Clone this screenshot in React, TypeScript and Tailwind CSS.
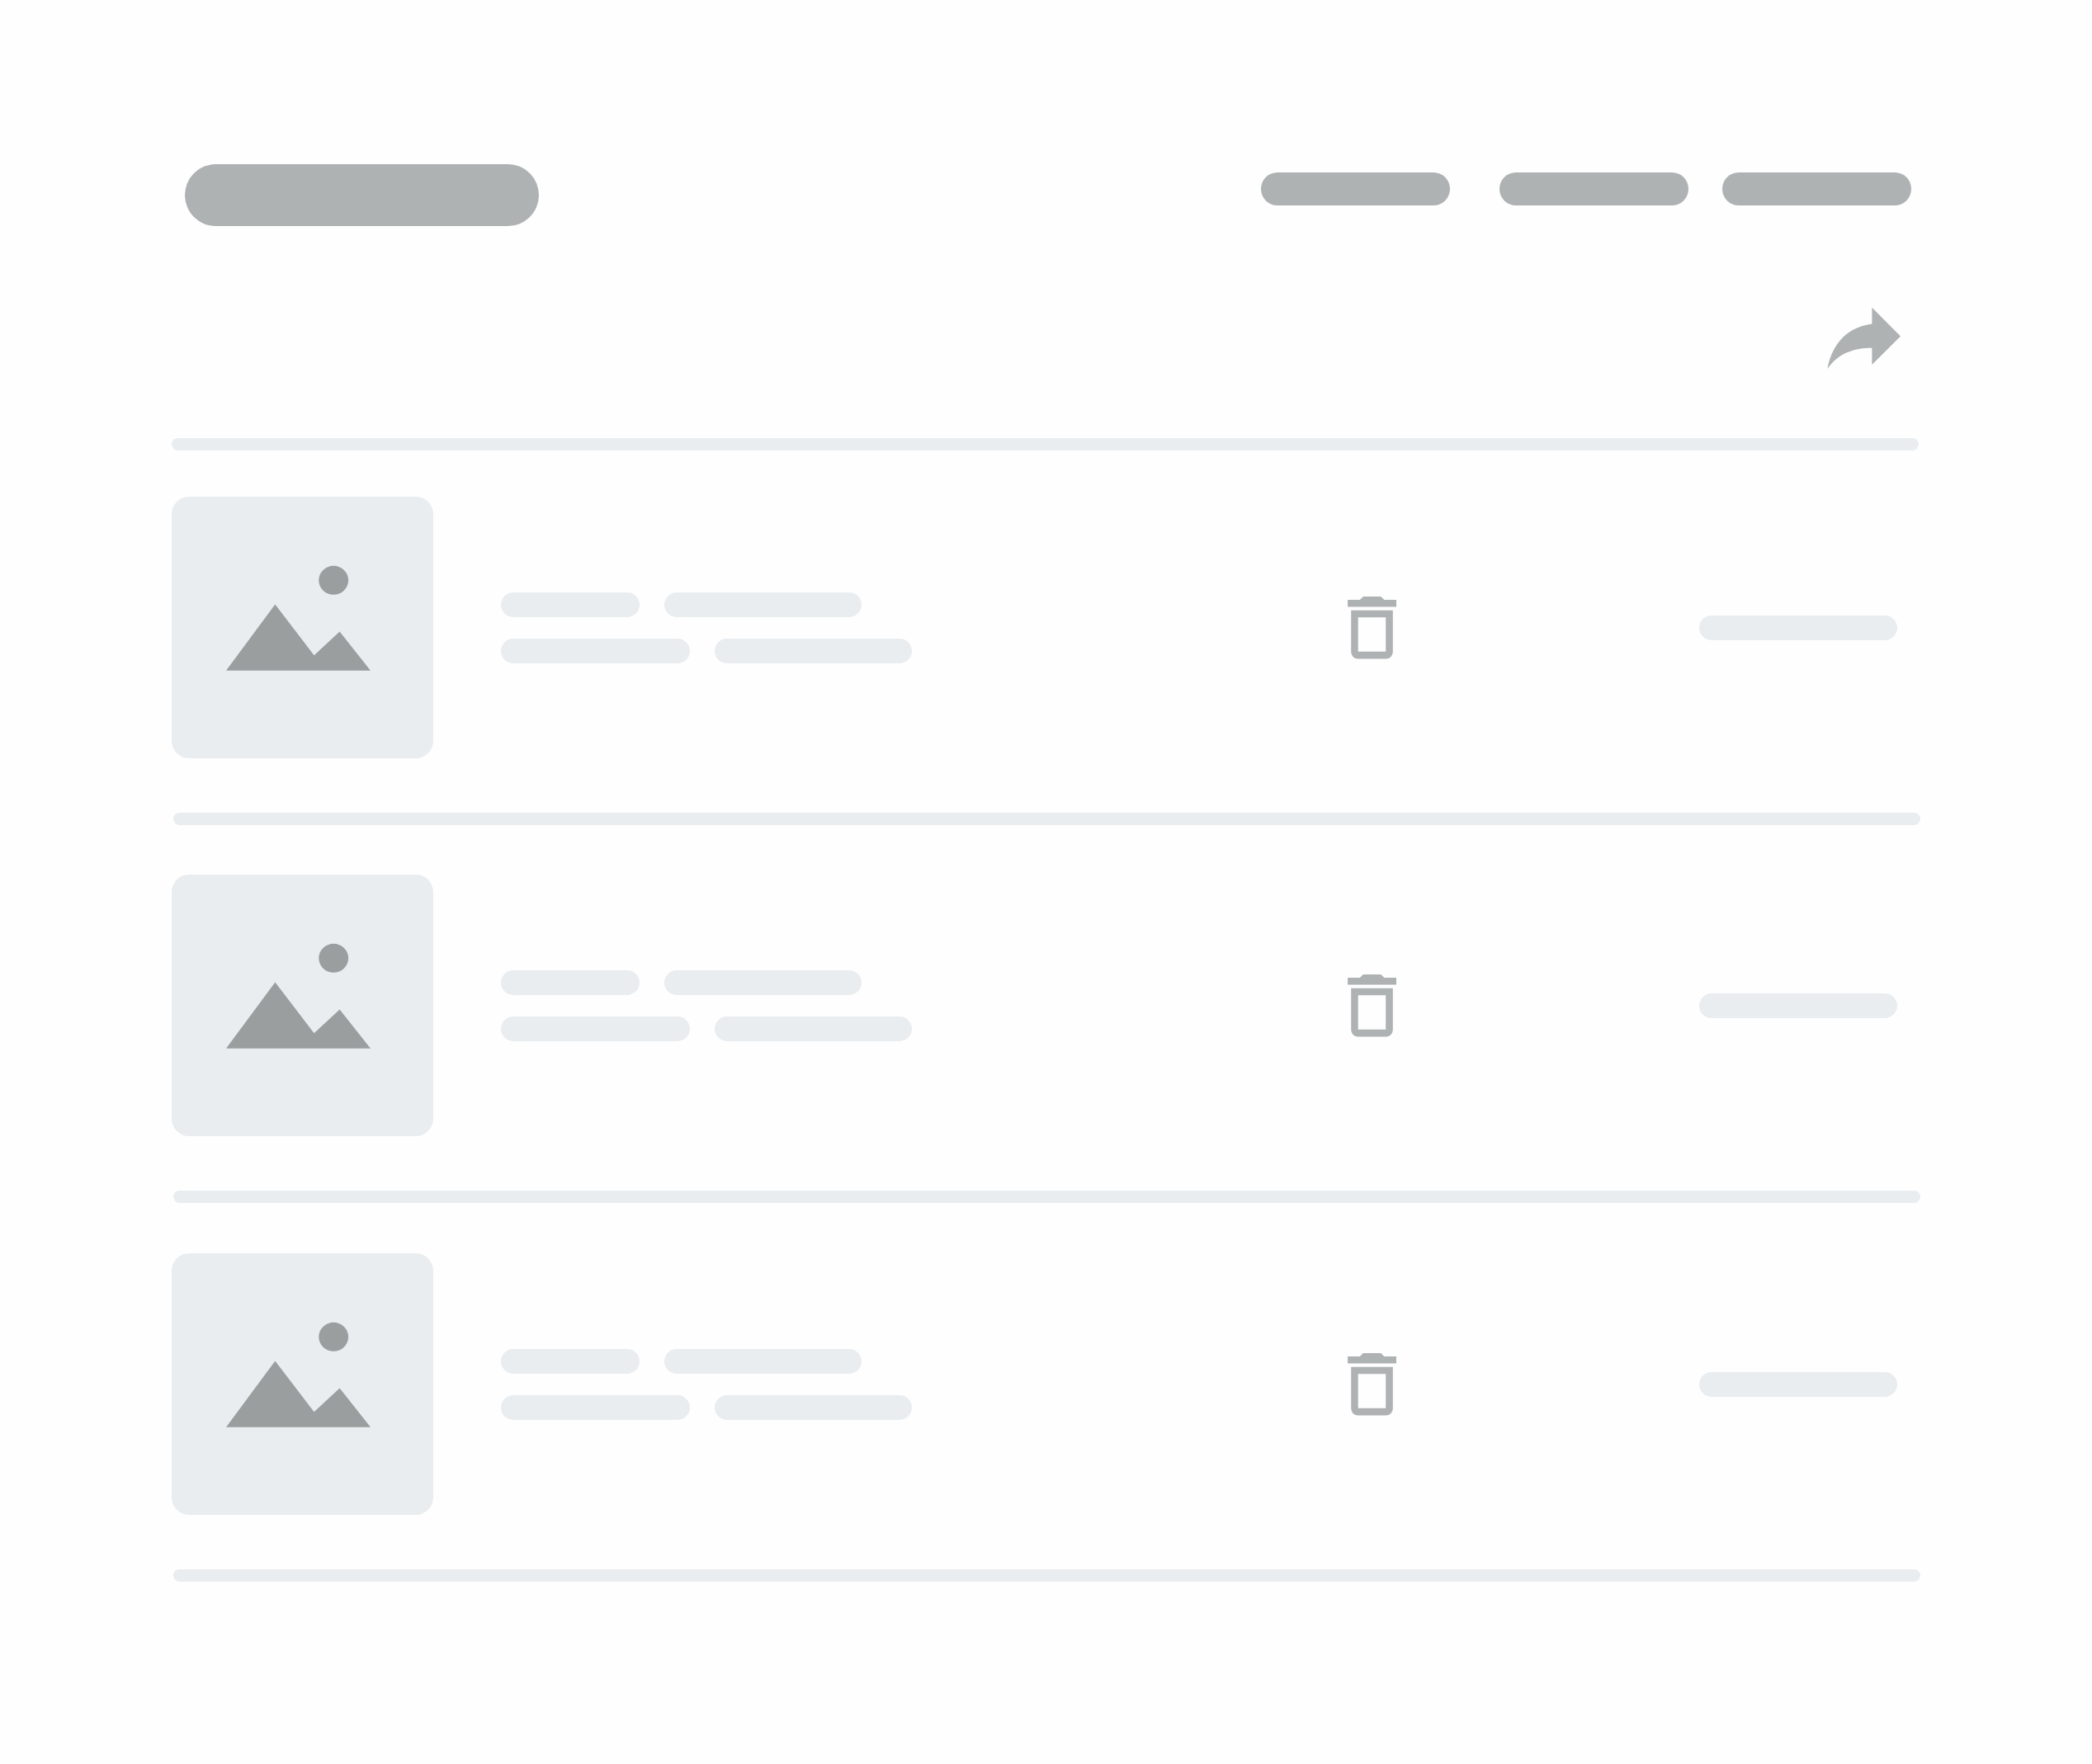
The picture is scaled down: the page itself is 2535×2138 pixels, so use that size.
type PillProps = { className: string };

function Pill({ className }: PillProps) {
  return <div className={`shrink-0 rounded-full ${className}`} />;
}

function ShareIcon() {
  return (
    <svg className="h-[76px] w-[90px] shrink-0" viewBox="2214 372 90 76" fill="#aeb2b3" aria-hidden="true">
      <path d="M2268.4 372.8L2303 407.4L2268.4 442V421.7C2244 421.7 2226.5 429.5 2214.4 447C2219.3 422 2233.5 397.5 2268.4 392.6Z" />
    </svg>
  );
}

function TrashIcon() {
  return (
    <svg className="h-[78px] w-[60px] shrink-0" viewBox="1633 722 60 78" fill="#aeb2b3" aria-hidden="true">
      <path d="M1633.1 727.1H1647.8L1652 722.9H1673.2L1677.4 727.1H1692V735.6H1633.1Z" />
      <path
        fillRule="evenodd"
        d="M1637.2 739.8H1687.8V790.2A8.4 8.4 0 0 1 1679.4 798.6H1645.6A8.4 8.4 0 0 1 1637.2 790.2ZM1645.7 748.2V789.8H1679.2V748.2Z"
      />
    </svg>
  );
}

function Thumbnail() {
  return (
    <div className="h-[317px] w-[317px] shrink-0 rounded-[21px] bg-[#e9edf0]">
      <svg className="h-full w-full" viewBox="208 602 317 317" fill="#9a9e9f" aria-hidden="true">
        <ellipse cx="404.2" cy="703.3" rx="17.9" ry="17.5" />
        <path d="M274 812.8L333.4 732.5L380.6 794.3L411.6 765.5L449 812.8Z" />
      </svg>
    </div>
  );
}

function Item() {
  return (
    <article className="flex h-[317px] items-center">
      <Thumbnail />
      <div className="ml-[82px] flex w-[1026px] flex-col gap-[26px]">
        <div className="flex gap-[30px]">
          <Pill className="h-[30px] w-[168px] bg-[#e9edf0]" />
          <Pill className="h-[30px] w-[239px] bg-[#e9edf0]" />
        </div>
        <div className="flex gap-[30px]">
          <Pill className="h-[30px] w-[229px] bg-[#e9edf0]" />
          <Pill className="h-[30px] w-[239px] bg-[#e9edf0]" />
        </div>
      </div>
      <TrashIcon />
      <Pill className="ml-[366px] h-[30px] w-[240px] bg-[#e9edf0]" />
    </article>
  );
}

function Divider({ className }: PillProps) {
  return <div className={`h-[15px] w-[2117px] rounded-full bg-[#e9edf0] ${className}`} />;
}

export default function App() {
  return (
    <main className="h-[2138px] w-[2535px] overflow-hidden bg-[#fefefe] pt-[198px] pl-[208px]">
      <header className="flex h-[174px] items-start pl-4">
        <Pill className="mt-px h-[75px] w-[429px] bg-[#aeb2b3]" />
        <nav className="mt-[11px] ml-[875px] flex">
          <Pill className="h-10 w-[229px] bg-[#aeb2b3]" />
          <Pill className="ml-[60px] h-10 w-[229px] bg-[#aeb2b3]" />
          <Pill className="ml-[41px] h-10 w-[229px] bg-[#aeb2b3]" />
        </nav>
      </header>
      <div className="flex h-[159px] items-start pl-[2006px]">
        <ShareIcon />
      </div>
      <Divider className="mb-14" />
      <Item />
      <Divider className="mt-[66px] mb-[60px] ml-[2px]" />
      <Item />
      <Divider className="mt-[66px] mb-[61px] ml-[2px]" />
      <Item />
      <Divider className="mt-[66px] ml-[2px]" />
    </main>
  );
}
